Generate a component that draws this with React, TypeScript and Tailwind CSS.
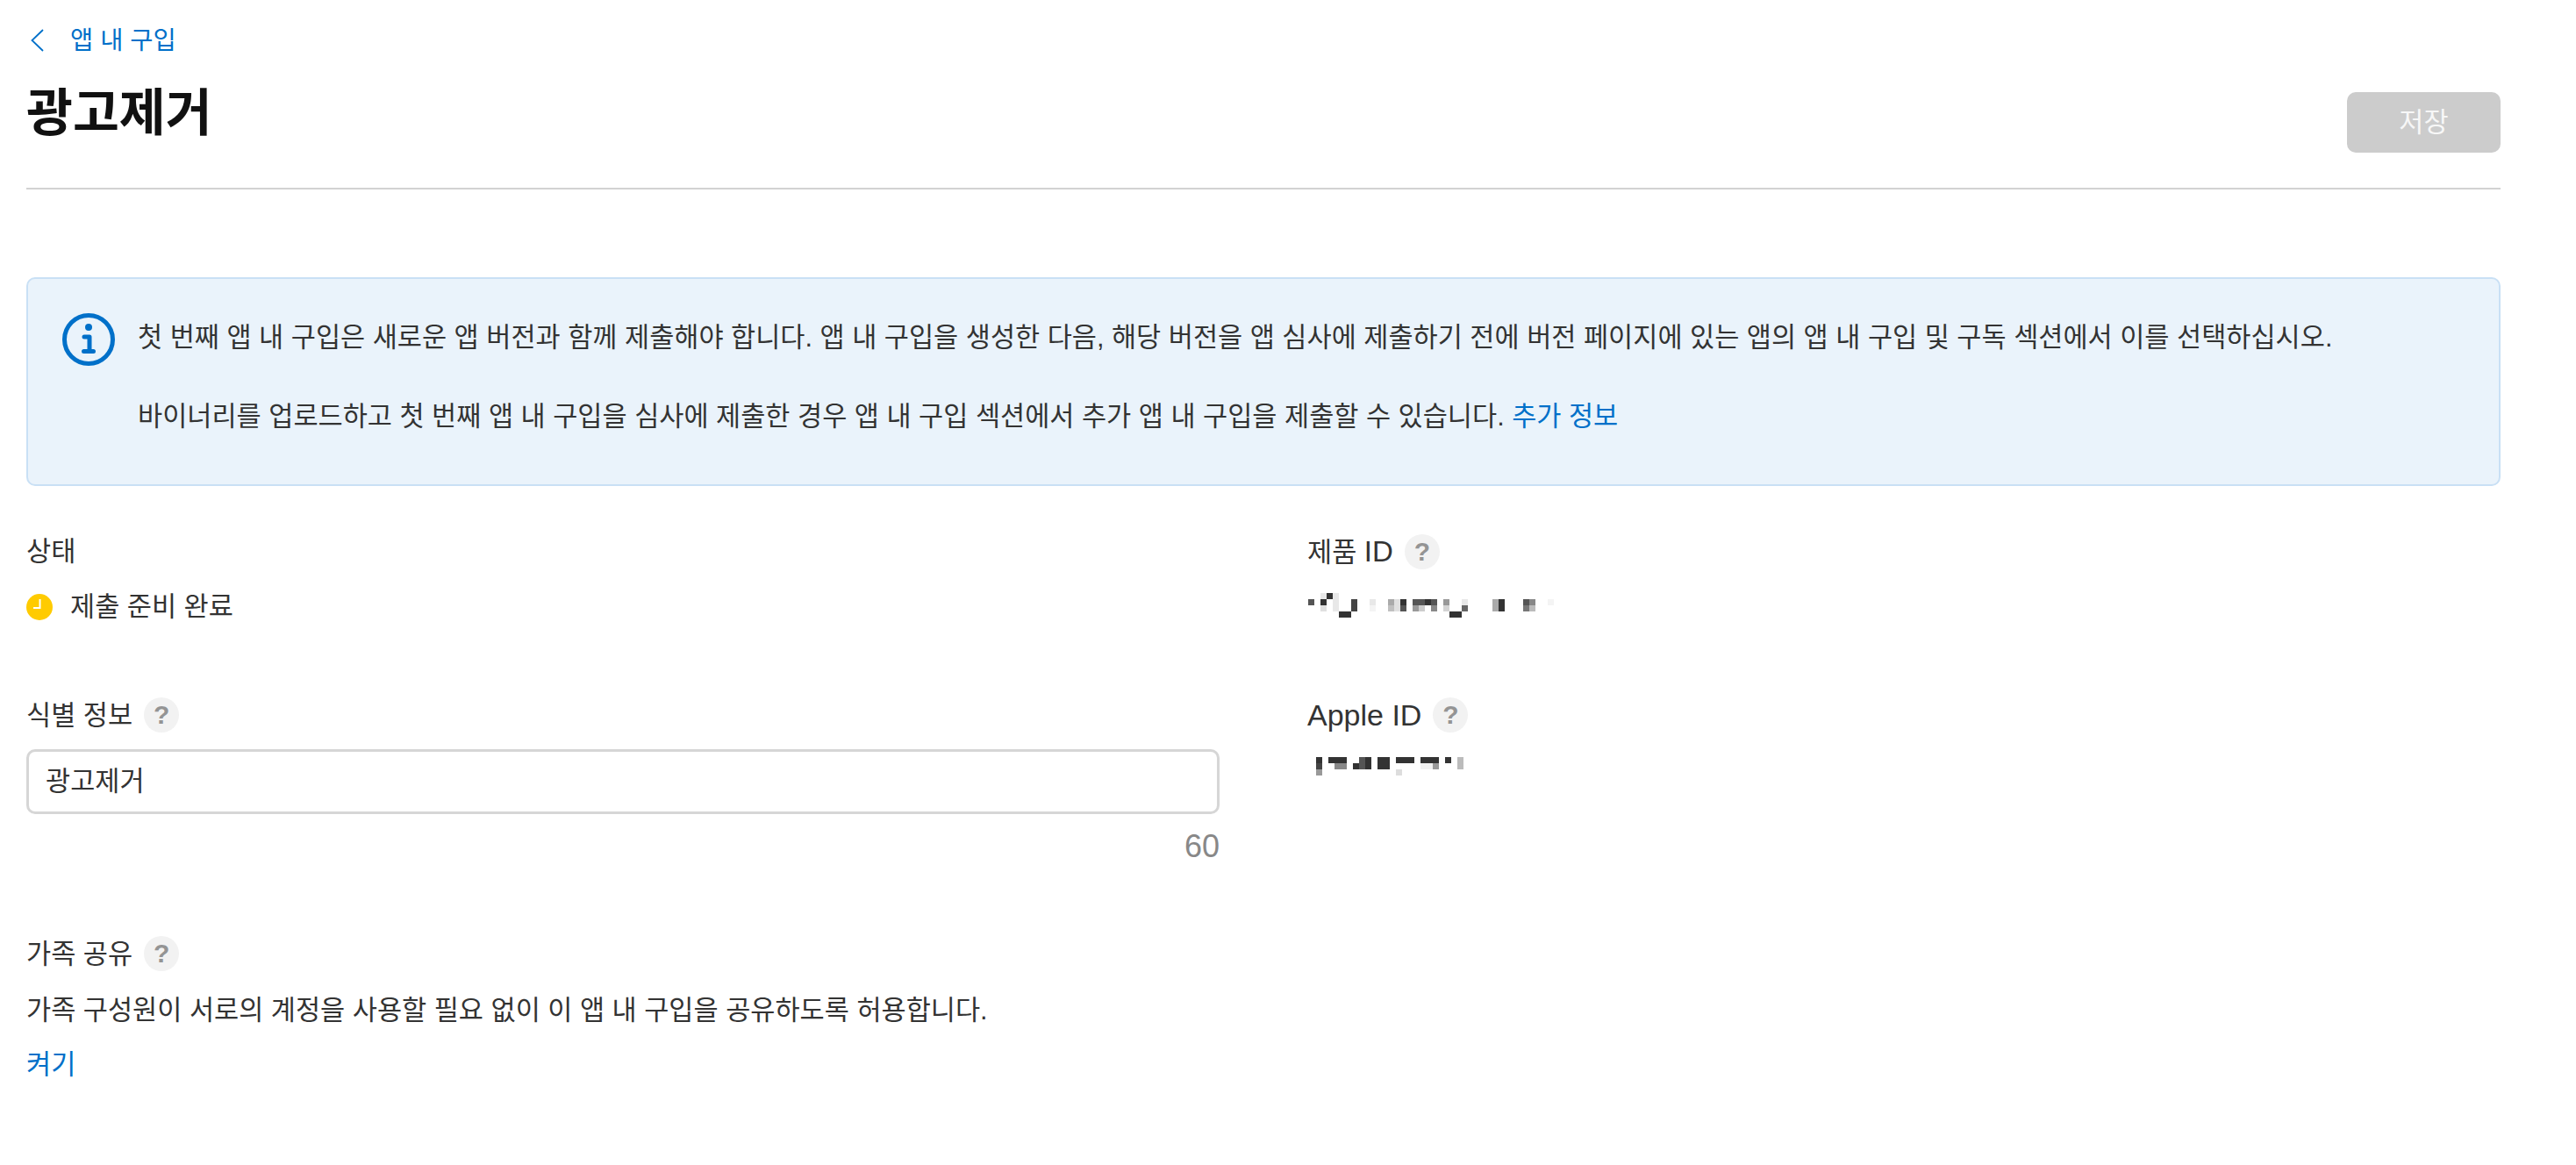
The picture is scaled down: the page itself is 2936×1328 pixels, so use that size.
import type { ReactNode } from 'react';

const KO = "font-['Liberation_Sans','Noto_Sans_CJK_KR',sans-serif]";

type Cell = [number, number, string];

// blurred ids: column, row, shade
const productCells: Cell[] = [
  [2, 0, '#e8e8e8'], [3, 0, '#333'], [4, 0, '#e8e8e8'],
  [0, 1, '#555'], [2, 1, '#333'], [4, 1, '#e8e8e8'], [7, 1, '#444'], [10, 1, '#e8e8e8'], [13, 1, '#aaa'], [14, 1, '#e0e0e0'], [15, 1, '#333'],
  [17, 1, '#555'], [18, 1, '#555'], [19, 1, '#333'], [20, 1, '#555'], [22, 1, '#999'], [25, 1, '#e8e8e8'], [30, 1, '#aaa'], [31, 1, '#333'], [35, 1, '#555'], [36, 1, '#888'], [39, 1, '#f4f4f4'],
  [2, 2, '#e0e0e0'], [4, 2, '#e8e8e8'], [7, 2, '#444'], [10, 2, '#f4f4f4'], [13, 2, '#c0c0c0'], [14, 2, '#e0e0e0'], [15, 2, '#555'],
  [17, 2, '#999'], [18, 2, '#ccc'], [20, 2, '#888'], [22, 2, '#d4d4d4'], [25, 2, '#666'], [30, 2, '#aaa'], [31, 2, '#333'], [35, 2, '#777'], [36, 2, '#bbb'],
  [5, 3, '#333'], [6, 3, '#333'], [23, 3, '#333'], [24, 3, '#333'],
];

const appleCells: Cell[] = [
  [0, 0, '#333'], [2, 0, '#333'], [3, 0, '#333'], [4, 0, '#333'], [7, 0, '#555'], [8, 0, '#333'], [10, 0, '#333'], [11, 0, '#333'],
  [13, 0, '#333'], [14, 0, '#333'], [15, 0, '#333'], [17, 0, '#333'], [18, 0, '#333'], [19, 0, '#333'], [21, 0, '#333'], [23, 0, '#bbb'],
  [0, 1, '#444'], [3, 1, '#888'], [4, 1, '#888'], [6, 1, '#333'], [7, 1, '#555'], [8, 1, '#333'], [10, 1, '#333'], [11, 1, '#333'],
  [17, 1, '#f0f0f0'], [18, 1, '#f0f0f0'], [19, 1, '#999'], [23, 1, '#bbb'],
  [0, 2, '#999'], [13, 2, '#ddd'],
];

function Blurred({ cells, width, height }: { cells: Cell[]; width: number; height: number }) {
  return (
    <svg width={width} height={height} viewBox={`0 0 ${width} ${height}`} className="block" shapeRendering="crispEdges">
      {cells.map(([c, r, fill]) => (
        <rect key={`${c}-${r}`} x={c * 7} y={r * 7} width="7" height="7" fill={fill} />
      ))}
    </svg>
  );
}

function Help() {
  return (
    <span className="flex h-10 w-10 shrink-0 items-center justify-center rounded-full bg-[#f2f2f2] text-[30px] leading-none font-bold text-[#949494]">
      ?
    </span>
  );
}

function Label({ children }: { children: ReactNode }) {
  return (
    <div className="flex h-10 items-center gap-[13px] text-[30.6px] leading-10 text-[#333]">
      <span>{children}</span>
      <Help />
    </div>
  );
}

export default function App() {
  return (
    <div className={`${KO} min-h-[1328px] bg-white pr-[86px] pl-[30px] text-[#333]`}>
      {/* header */}
      <div className="flex h-[216px] flex-col border-b-2 border-[#d2d2d2] pt-[28px]">
        <a className="flex h-[36px] items-center text-[28.5px] leading-9 text-[#0070c9]">
          <svg width="15" height="26" viewBox="0 0 15 26" fill="none" stroke="currentColor" strokeWidth="1.8" className="mr-[30px] ml-[5px]">
            <path d="M14 1 1.5 13 14 25" />
          </svg>
          앱 내 구입
        </a>
        <div className="flex items-start justify-between">
          <h1 className="mt-[30px] text-[57.5px] leading-[70px] font-bold text-[#111]">광고제거</h1>
          <button className="mt-[41px] h-[69px] w-[175px] rounded-[10px] bg-[#cccccc] text-[30.6px] text-[#f7f7f7]">저장</button>
        </div>
      </div>

      {/* notice */}
      <div className="mt-[100px] flex h-[238px] rounded-[10px] border-2 border-[#c9e0f5] bg-[#eaf3fb] pt-[39px] pl-[39px]">
        <svg width="60" height="60" viewBox="0 0 60 60" className="shrink-0 text-[#0070c9]">
          <circle cx="30" cy="30" r="27.5" fill="none" stroke="currentColor" strokeWidth="5" />
          <circle cx="30" cy="16" r="4" fill="currentColor" />
          <path d="M25 27h6v16M24.5 43.5h11" fill="none" stroke="currentColor" strokeWidth="5" strokeLinecap="round" strokeLinejoin="round" />
        </svg>
        <div className="mt-[5px] ml-[26px] text-[30.6px] leading-[45px]">
          <p>첫 번째 앱 내 구입은 새로운 앱 버전과 함께 제출해야 합니다. 앱 내 구입을 생성한 다음, 해당 버전을 앱 심사에 제출하기 전에 버전 페이지에 있는 앱의 앱 내 구입 및 구독 섹션에서 이를 선택하십시오.</p>
          <p className="mt-[45px]">
            바이너리를 업로드하고 첫 번째 앱 내 구입을 심사에 제출한 경우 앱 내 구입 섹션에서 추가 앱 내 구입을 제출할 수 있습니다. <a className="text-[#0070c9]">추가 정보</a>
          </p>
        </div>
      </div>

      {/* fields */}
      <div className="mt-[55px] grid grid-cols-[1360px_1fr] gap-x-[100px]">
        <div>
          <div className="flex h-10 items-center text-[30.6px]">상태</div>
          <div className="mt-[23px] flex h-10 items-center gap-[20px] text-[30.6px]">
            <svg width="30" height="30" viewBox="0 0 30 30">
              <circle cx="15" cy="15" r="15" fill="#ffcb00" />
              <path d="M15.5 6v10H8" fill="none" stroke="#fff" strokeWidth="2" />
            </svg>
            제출 준비 완료
          </div>
        </div>
        <div>
          <Label>
            제품 <span className="text-[33px]">ID</span>
          </Label>
          <div className="mt-[27px] pl-[1px]">
            <Blurred cells={productCells} width={287} height={29} />
          </div>
        </div>

        <div className="mt-[83px]">
          <Label>식별 정보</Label>
          <div className="mt-[19px] flex h-[74px] items-center rounded-[10px] border-[3px] border-[#d6d6d6] px-[19px] text-[30.6px]">광고제거</div>
          <div className="mt-[19px] text-right text-[36px] leading-9 text-[#888]">60</div>
        </div>
        <div className="mt-[83px]">
          <div className="flex h-10 items-center gap-[13px] text-[34px] leading-10">
            <span>Apple ID</span>
            <Help />
          </div>
          <div className="mt-[28px] pl-[10px]">
            <Blurred cells={appleCells} width={168} height={21} />
          </div>
        </div>
      </div>

      {/* family sharing */}
      <div className="mt-[84px]">
        <Label>가족 공유</Label>
        <p className="mt-[24px] text-[30.6px] leading-10">가족 구성원이 서로의 계정을 사용할 필요 없이 이 앱 내 구입을 공유하도록 허용합니다.</p>
        <a className="mt-[22px] block text-[30.6px] leading-10 text-[#0070c9]">켜기</a>
      </div>
    </div>
  );
}
